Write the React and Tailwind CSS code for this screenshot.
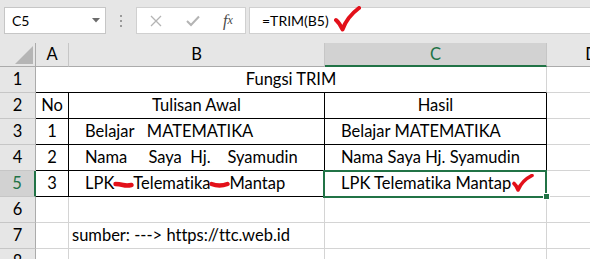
import React from "react";

const GRID = "grid grid-cols-[36px_33px_256px_222px_90px]";

const ColHead = ({ label, active }) => (
  <div
    className={
      active
        ? "h-[24px] flex items-center justify-center bg-[#d2d2d2] text-[#217346] border-r border-r-[#c6c6c6] border-b-2 border-b-[#217346]"
        : "h-[24px] flex items-center justify-center bg-[#e6e6e6] text-black border-r border-r-[#c6c6c6] border-b border-b-[#ababab]"
    }
  >
    {label}
  </div>
);

const RowHead = ({ n, active }) => (
  <div
    className={
      active
        ? "h-[26px] flex items-center justify-center bg-[#d2d2d2] text-[#217346] border-r-2 border-r-[#217346] border-b border-b-[#c6c6c6]"
        : "h-[26px] flex items-center justify-center bg-[#e6e6e6] text-black border-r border-r-[#ababab] border-b border-b-[#c6c6c6]"
    }
  >
    {n}
  </div>
);

// plain gridline cell vs. black table border cell
const Cell = ({ children, dark, center, indent, className = "" }) => (
  <div
    className={`h-[26px] flex items-center whitespace-pre bg-white border-r border-b ${
      dark ? "border-black" : "border-[#d4d4d4]"
    } ${center ? "justify-center" : ""} ${indent ? "pl-[16px]" : ""} ${className}`}
  >
    {children}
  </div>
);

const RedDash = ({ curve }) => (
  <svg width="21" height="8" viewBox="0 0 21 8" className="inline-block mx-[-1px] translate-y-[1px]">
    <path
      d={curve ? "M2.5 3 Q10.5 6 18.5 3" : "M2.5 3 Q6 3 10 4 T18.5 4"}
      fill="none"
      stroke="#e3101a"
      strokeWidth="4.4"
      strokeLinecap="round"
    />
  </svg>
);

export default function App() {
  return (
    <div className="w-[590px] h-[259px] overflow-hidden bg-[#e6e6e6] font-[Lato,sans-serif] [font-variant-ligatures:none] text-black text-[16.5px]">
      {/* formula bar */}
      <div className="h-[43px] flex items-start pt-[7px] pl-[4px]">
        <div className="w-[102px] h-[27px] bg-white border border-[#c6c6c6] flex items-center justify-between pl-[7px] pr-[5px] text-[14px]">
          <span>C5</span>
          <svg width="8" height="5" viewBox="0 0 8 5">
            <path d="M0 0 H8 L4 4.5 Z" fill="#6b6b6b" />
          </svg>
        </div>
        <div className="w-[30px] h-[27px] flex flex-col items-center justify-center gap-[3px]">
          <span className="w-[2px] h-[2px] bg-[#9a9a9a]" />
          <span className="w-[2px] h-[2px] bg-[#9a9a9a]" />
          <span className="w-[2px] h-[2px] bg-[#9a9a9a]" />
        </div>
        <div className="w-[110px] h-[27px] bg-white border border-[#d0d0d0] flex items-center">
          <div className="w-[38px] flex justify-center">
            <svg width="12" height="12" viewBox="0 0 12 12">
              <path d="M1 1 L11 11 M11 1 L1 11" stroke="#b4b4b4" strokeWidth="1.3" />
            </svg>
          </div>
          <div className="w-[36px] flex justify-center">
            <svg width="14" height="12" viewBox="0 0 14 12">
              <path d="M1 6 L5 10 L13 1.5" fill="none" stroke="#b4b4b4" strokeWidth="2" />
            </svg>
          </div>
          <div className="w-[34px] flex justify-center font-[Liberation_Serif,serif] italic text-[#4a4a4a] text-[16px]">
            f<span className="text-[12px] translate-y-[2px]">x</span>
          </div>
        </div>
        <div className="ml-[3px] flex-1 h-[27px] bg-white border border-[#d0d0d0] border-r-0 flex items-center pl-[12px] text-[14px]">
          <span>=TRIM(B5)</span>
          <svg width="27" height="26" viewBox="0 0 27 26" className="ml-[5px] relative -top-[2px]">
            <path
              d="M2 14 Q5.5 17 8.5 23.5 Q13 11 25 2"
              fill="none"
              stroke="#e3101a"
              strokeWidth="4"
              strokeLinecap="round"
              strokeLinejoin="round"
            />
          </svg>
        </div>
      </div>

      {/* sheet */}
      <div className={GRID}>
        <div className="h-[24px] relative bg-[#e6e6e6] border-r border-r-[#ababab] border-b border-b-[#ababab]">
          <svg width="18" height="18" viewBox="0 0 18 18" className="absolute left-[15px] top-[3px]">
            <path d="M18 0 V18 H0 Z" fill="#b5b5b5" />
          </svg>
        </div>
        <ColHead label="A" />
        <ColHead label="B" />
        <ColHead label="C" active />
        <ColHead label="D" />

        {/* row 1 */}
        <RowHead n={1} />
        <div className="col-span-3 h-[26px] flex items-center justify-center bg-white border-b border-b-black border-r border-r-[#d4d4d4]">
          Fungsi TRIM
        </div>
        <Cell />

        {/* row 2 */}
        <RowHead n={2} />
        <Cell dark center>No</Cell>
        <Cell dark center>Tulisan Awal</Cell>
        <Cell dark center>Hasil</Cell>
        <Cell />

        {/* row 3 */}
        <RowHead n={3} />
        <Cell dark center>1</Cell>
        <Cell dark indent>{"Belajar   MATEMATIKA"}</Cell>
        <Cell dark indent>Belajar MATEMATIKA</Cell>
        <Cell />

        {/* row 4 */}
        <RowHead n={4} />
        <Cell dark center>2</Cell>
        <Cell dark indent>{"Nama     Saya  Hj.    Syamudin"}</Cell>
        <Cell dark indent>Nama Saya Hj. Syamudin</Cell>
        <Cell />

        {/* row 5 */}
        <RowHead n={5} active />
        <Cell dark center>3</Cell>
        <Cell dark indent>
          LPK<RedDash />Telematika<RedDash curve />Mantap
        </Cell>
        <Cell dark indent className="relative">
          LPK Telematika Mantap
          <svg width="22" height="18" viewBox="0 0 22 18" className="ml-[1px] -translate-y-[1px]">
            <path
              d="M2 9.5 Q4.5 11.5 6 16 Q10 6.5 20 1.5"
              fill="none"
              stroke="#e3101a"
              strokeWidth="3.6"
              strokeLinecap="round"
              strokeLinejoin="round"
            />
          </svg>
          <div className="absolute -left-[2px] -top-[1px] -right-[1px] -bottom-[2px] border-2 border-[#217346]" />
          <div className="absolute -right-[4px] -bottom-[4px] w-[7px] h-[7px] bg-[#217346] border border-white" />
        </Cell>
        <Cell />

        {/* row 6 */}
        <RowHead n={6} />
        <Cell />
        <Cell />
        <Cell />
        <Cell />

        {/* row 7 */}
        <RowHead n={7} />
        <Cell />
        <Cell className="pl-[3px]">{"sumber: ---> https://ttc.web.id"}</Cell>
        <Cell />
        <Cell />

        {/* row 8 */}
        <RowHead n={8} />
        <Cell />
        <Cell />
        <Cell />
        <Cell />
      </div>
    </div>
  );
}
